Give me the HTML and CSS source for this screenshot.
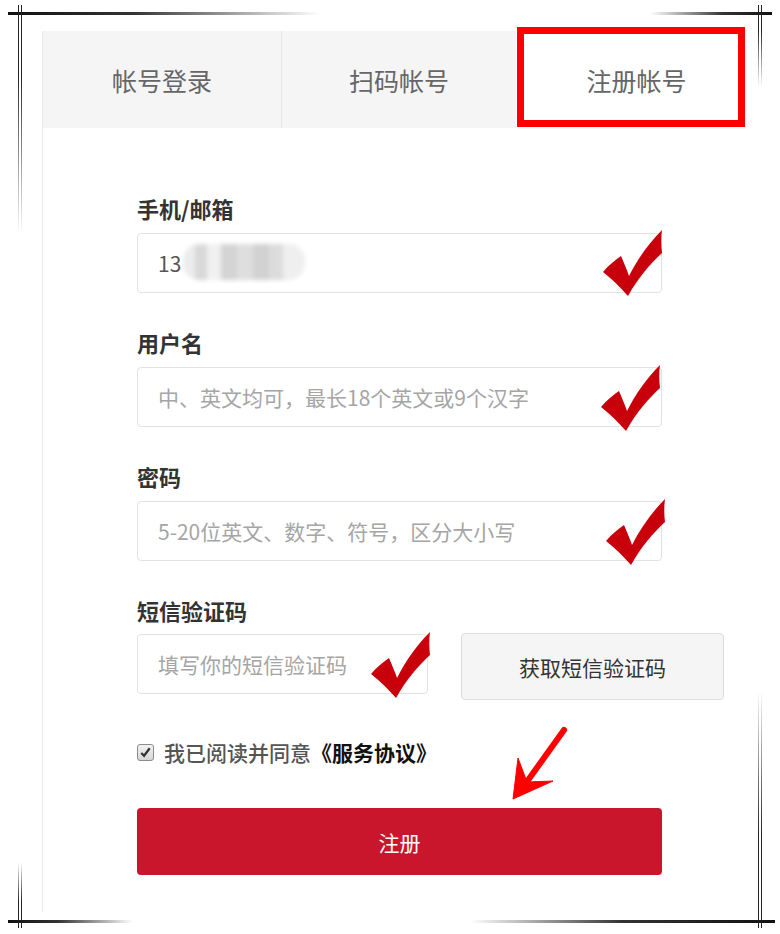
FILE: index.html
```html
<!DOCTYPE html>
<html lang="zh-CN">
<head>
    <meta charset="UTF-8">
    <meta name="viewport" content="width=device-width, initial-scale=1.0">
    <title>注册帐号</title>
    <link rel="stylesheet" href="styles.css">
</head>
<body>
    <!-- Photo frame corners -->
    <div class="frame">
        <span class="fh fh-tl"></span>
        <span class="fh fh-tr"></span>
        <span class="fh fh-bl"></span>
        <span class="fh fh-br"></span>
        <span class="fv fv-tl"></span>
        <span class="fv fv-bl"></span>
        <span class="fv fv-tr"></span>
        <span class="fv fv-br"></span>
    </div>

    <div class="panel">
        <!-- Tabs -->
        <div class="tabs">
            <div class="tab tab-1">帐号登录</div>
            <div class="tab tab-2">扫码帐号</div>
            <div class="tab active">注册帐号</div>
        </div>

        <!-- Register Form -->
        <form class="form" id="registerForm">
            <div class="field">
                <label class="label">手机/邮箱</label>
                <div class="control">
                    <input class="input" type="text" value="13">
                    <span class="mosaic"></span>
                    <svg class="tick tick-phone" viewBox="0 0 64 70"><path d="M1,44 C7,37 13,32 19,28 C22,35 25,42 27,48 C35,32 46,16 60,2 C59,9 59,17 60,25 C49,35 36,50 26,68 C18,59 10,51 1,44 Z"/></svg>
                </div>
            </div>

            <div class="field">
                <label class="label">用户名</label>
                <div class="control">
                    <input class="input" type="text" placeholder="中、英文均可，最长18个英文或9个汉字">
                    <svg class="tick" viewBox="0 0 64 70"><path d="M1,44 C7,37 13,32 19,28 C22,35 25,42 27,48 C35,32 46,16 60,2 C59,9 59,17 60,25 C49,35 36,50 26,68 C18,59 10,51 1,44 Z"/></svg>
                </div>
            </div>

            <div class="field">
                <label class="label">密码</label>
                <div class="control">
                    <input class="input" type="password" placeholder="5-20位英文、数字、符号，区分大小写">
                    <svg class="tick tick-pwd" viewBox="0 0 64 70"><path d="M1,44 C7,37 13,32 19,28 C22,35 25,42 27,48 C35,32 46,16 60,2 C59,9 59,17 60,25 C49,35 36,50 26,68 C18,59 10,51 1,44 Z"/></svg>
                </div>
            </div>

            <div class="field">
                <label class="label">短信验证码</label>
                <div class="code-row">
                    <div class="control code-control">
                        <input class="input" type="text" placeholder="填写你的短信验证码">
                        <svg class="tick tick-code" viewBox="0 0 64 70"><path d="M1,44 C7,37 13,32 19,28 C22,35 25,42 27,48 C35,32 46,16 60,2 C59,9 59,17 60,25 C49,35 36,50 26,68 C18,59 10,51 1,44 Z"/></svg>
                    </div>
                    <button class="code-btn" type="button">获取短信验证码</button>
                </div>
            </div>

            <div class="agree">
                <span class="checkbox">
                    <svg viewBox="0 0 16 16"><path d="M3.5,8.5 L6.5,11.5 L12.5,3.5" /></svg>
                </span>
                <span>我已阅读并同意</span><b class="terms">《服务协议》</b>
                <svg class="arrow" viewBox="0 0 70 85">
                    <line x1="59" y1="10" x2="21" y2="63" />
                    <polygon points="8,79 13,38 22,62 48,61" />
                </svg>
            </div>

            <button class="submit" type="submit">注册</button>
        </form>
    </div>
</body>
</html>
```

FILE: styles.css
```css
body {
    font-family: "Noto Sans CJK SC", "Noto Sans", sans-serif;
    margin: 0;
    width: 780px;
    height: 934px;
    position: relative;
    overflow: hidden;
    background-color: #fff;
}

/* frame corners */
.frame {
    position: absolute;
    inset: 0;
    pointer-events: none;
    z-index: 5;
}
.fh {
    position: absolute;
    height: 3px;
}
.fh-tl {
    left: 8px;
    top: 12px;
    width: 312px;
    background: linear-gradient(to right, #111 0%, #333 40%, rgba(0, 0, 0, 0) 100%);
}
.fh-tr {
    left: 650px;
    top: 12px;
    width: 122px;
    background: linear-gradient(to left, #111 0%, #333 40%, rgba(0, 0, 0, 0) 100%);
}
.fh-bl {
    left: 8px;
    top: 920px;
    width: 125px;
    background: linear-gradient(to right, #111 0%, #333 40%, rgba(0, 0, 0, 0) 100%);
}
.fh-br {
    left: 470px;
    top: 920px;
    width: 305px;
    background: linear-gradient(to left, #111 0%, #333 50%, rgba(0, 0, 0, 0) 100%);
}
.fv {
    position: absolute;
    width: 2px;
    border-left: 1px solid #222;
    border-right: 1px solid #222;
}
.fv-tl {
    left: 18px;
    top: 5px;
    height: 230px;
    -webkit-mask-image: linear-gradient(to bottom, #000 30%, transparent);
}
.fv-bl {
    left: 18px;
    top: 862px;
    height: 66px;
    -webkit-mask-image: linear-gradient(to top, #000 40%, transparent);
}
.fv-tr {
    left: 758px;
    top: 5px;
    height: 82px;
    -webkit-mask-image: linear-gradient(to bottom, #000 30%, transparent);
}
.fv-br {
    left: 758px;
    top: 690px;
    height: 238px;
    -webkit-mask-image: linear-gradient(to top, #000 40%, transparent);
}

/* panel */
.panel {
    margin: 31px 0 0 42px;
    width: 703px;
    height: 881px;
    border-left: 1px solid #ececec;
    box-sizing: border-box;
}
.tabs {
    display: flex;
    height: 97px;
}
.tab {
    display: flex;
    align-items: center;
    justify-content: center;
    font-size: 25px;
    color: #666;
    background-color: #f5f5f5;
}
.tab-1 {
    width: 238px;
    border-right: 1px solid #e6e6e6;
}
.tab-2 {
    width: 234px;
}
.tab.active {
    flex: 1;
    padding-left: 12px;
    background-color: #fff;
    position: relative;
}
.tab.active::after {
    content: "";
    position: absolute;
    top: -4px;
    left: 1px;
    right: 0;
    bottom: 1px;
    border: 7px solid #f00;
}

/* form */
.form {
    padding: 67px 0 0 94px;
    width: 525px;
}
.field + .field {
    margin-top: 36px;
}
.label {
    display: block;
    font-size: 22px;
    line-height: 26px;
    font-weight: bold;
    color: #333;
}
.control {
    position: relative;
    margin-top: 12px;
    width: 525px;
    height: 60px;
}
.input {
    width: 100%;
    height: 60px;
    box-sizing: border-box;
    border: 1px solid #e2e2e2;
    border-radius: 4px;
    padding: 0 20px;
    font-family: "Noto Sans CJK SC", "Noto Sans", sans-serif;
    font-size: 21px;
    color: #555;
    outline: none;
    background: #fff;
}
.input::placeholder {
    color: #a5a5a5;
}
.mosaic {
    position: absolute;
    left: 46px;
    top: 11px;
    width: 122px;
    height: 36px;
    border-radius: 16px;
    background: linear-gradient(90deg, #ececec 0 12px, #d9d9d9 12px 24px, #f0f0f0 24px 38px, #d4d4d4 38px 54px, #dedede 54px 70px, #d2d2d2 70px 86px, #dcdcdc 86px 100px, #efefef 100px);
    filter: blur(2px);
}
.tick {
    position: absolute;
    left: 463px;
    top: -4px;
    width: 64px;
    height: 70px;
    fill: #c8000b;
}
.tick-phone {
    left: 465px;
    top: -5px;
}
.tick-pwd {
    left: 468px;
    top: -4px;
}
.code-row {
    display: flex;
    align-items: flex-start;
    gap: 33px;
    width: 587px;
    margin-top: 10px;
}
.code-control {
    width: 291px;
    margin-top: 1px;
}
.tick-code {
    left: 233px;
    top: -4px;
}
.code-btn {
    width: 263px;
    height: 67px;
    background-color: #f5f5f5;
    border: 1px solid #dcdcdc;
    border-radius: 4px;
    font-family: "Noto Sans CJK SC", "Noto Sans", sans-serif;
    font-size: 21px;
    color: #333;
}
.agree {
    position: relative;
    display: flex;
    align-items: center;
    margin-top: 39px;
    font-size: 21px;
    line-height: 26px;
    font-weight: 500;
    color: #555;
}
.checkbox {
    width: 15px;
    height: 15px;
    margin-right: 10px;
    border: 1px solid #8c8c8c;
    border-radius: 3px;
    background: linear-gradient(#f2f2f2, #d6d6d6);
}
.checkbox svg {
    display: block;
    width: 15px;
    height: 15px;
    fill: none;
    stroke: #333;
    stroke-width: 2.4;
}
.terms {
    color: #111;
    font-weight: bold;
}
.arrow {
    position: absolute;
    left: 368px;
    top: -19px;
    width: 70px;
    height: 85px;
    fill: #f00;
    stroke: #f00;
}
.arrow line {
    stroke-width: 6;
    stroke-linecap: round;
}
.arrow polygon {
    stroke-width: 1;
    stroke-linejoin: round;
}
.submit {
    display: block;
    margin-top: 43px;
    width: 525px;
    height: 67px;
    border: none;
    border-radius: 4px;
    background-color: #c9162c;
    color: #fff;
    font-family: "Noto Sans CJK SC", "Noto Sans", sans-serif;
    font-size: 21px;
}
```
